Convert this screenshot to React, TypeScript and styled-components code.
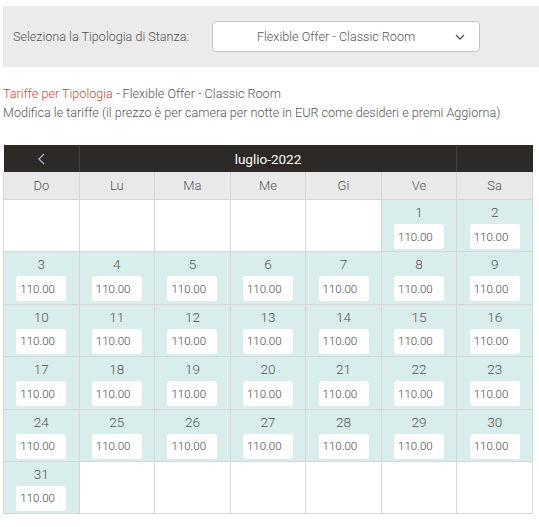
import styled, { createGlobalStyle } from 'styled-components';

const GlobalStyle = createGlobalStyle`
  body {
    margin: 0;
    background: #fff;
    font-family: Roboto, 'Liberation Sans', sans-serif;
    font-weight: 300;
    color: #555;
    overflow: hidden;
  }
`;

const WEEKDAYS = ['Do', 'Lu', 'Ma', 'Me', 'Gi', 'Ve', 'Sa'];
const FIRST_WEEKDAY = 5;
const DAYS_IN_MONTH = 31;

const StdPage = styled.div`
  padding: 6px 0 0 3px;
`;

const StdToolbar = styled.div`
  height: 61px;
  display: flex;
  align-items: center;
  padding-left: 10px;
  background: #ebebeb;
`;

const StdLabel = styled.span`
  font-size: 12.6px;
  color: #555;
  width: 199px;
`;

const StdSelect = styled.div`
  position: relative;
  width: 268px;
  height: 31px;
  box-sizing: border-box;
  display: flex;
  align-items: center;
  justify-content: center;
  padding-right: 20px;
  background: #fff;
  border: 1px solid #c4c4c4;
  border-radius: 4px;
  font-size: 12.6px;
  color: #555;

  svg {
    position: absolute;
    right: 14px;
    top: 12px;
  }
`;

const StdIntro = styled.div`
  margin-top: 17px;
  font-size: 12.6px;
  line-height: 19px;
  color: #555;
`;

const StdAccent = styled.span`
  color: #d0473a;
`;

const StdTable = styled.table`
  margin-top: 23px;
  width: 530px;
  border-collapse: collapse;
  table-layout: fixed;
`;

const StdNavCell = styled.th`
  height: 27px;
  padding: 0;
  background: #2d2926;
  border-right: 1px solid #45403c;
  color: #fff;
  font-size: 13.5px;
  font-weight: 400;
  text-align: center;
  vertical-align: middle;

  &:last-child {
    border-right: none;
  }
`;

const StdWeekday = styled.th`
  height: 27px;
  padding: 0;
  background: #e9e9e9;
  border: 1px solid #d6d6d6;
  border-top: none;
  font-size: 13px;
  font-weight: 300;
  color: #555;
  text-align: center;
`;

const StdDay = styled.td<{ $active: boolean }>`
  height: 51.4px;
  padding: 0;
  border: 1px solid #d6d6d6;
  background: ${(p) => (p.$active ? '#d9eeec' : '#fff')};
  text-align: center;
  vertical-align: top;
`;

const StdDayNumber = styled.div`
  margin-top: 3px;
  height: 19px;
  line-height: 19px;
  font-size: 13.5px;
  color: #555;
`;

const StdRateInput = styled.input`
  display: block;
  margin: 2px auto 0;
  width: 50px;
  height: 25px;
  box-sizing: border-box;
  padding: 0 0 0 4px;
  border: none;
  border-radius: 3px;
  background: #fff;
  font-family: Roboto, 'Liberation Sans', sans-serif;
  font-weight: 300;
  font-size: 11.5px;
  color: #444;
  outline: none;
`;

const ChevronDown = () => (
  <svg width="10" height="6" viewBox="0 0 10 6">
    <polyline points="1,1 5,5 9,1" fill="none" stroke="#555" strokeWidth="1.4" />
  </svg>
);

const ChevronLeft = () => (
  <svg width="7" height="12" viewBox="0 0 7 12" style={{ display: 'block', margin: '0 auto' }}>
    <polyline points="6,1 1,6 6,11" fill="none" stroke="#b8b2c8" strokeWidth="1.3" />
  </svg>
);

const buildWeeks = () => {
  const cells: (number | null)[] = [];
  for (let i = 0; i < FIRST_WEEKDAY; i++) cells.push(null);
  for (let d = 1; d <= DAYS_IN_MONTH; d++) cells.push(d);
  while (cells.length % 7 !== 0) cells.push(null);
  const weeks: (number | null)[][] = [];
  for (let i = 0; i < cells.length; i += 7) weeks.push(cells.slice(i, i + 7));
  return weeks;
};

const App: React.FC = () => {
  const weeks = buildWeeks();

  return (
    <StdPage>
      <GlobalStyle />
      <StdToolbar>
        <StdLabel>Seleziona la Tipologia di Stanza:</StdLabel>
        <StdSelect>
          Flexible Offer - Classic Room
          <ChevronDown />
        </StdSelect>
      </StdToolbar>

      <StdIntro>
        <StdAccent>Tariffe per Tipologia</StdAccent> - Flexible Offer - Classic Room
        <br />
        Modifica le tariffe (il prezzo è per camera per notte in EUR come desideri e premi Aggiorna)
      </StdIntro>

      <StdTable>
        <thead>
          <tr>
            <StdNavCell>
              <ChevronLeft />
            </StdNavCell>
            <StdNavCell colSpan={5}>luglio-2022</StdNavCell>
            <StdNavCell />
          </tr>
          <tr>
            {WEEKDAYS.map((w) => (
              <StdWeekday key={w}>{w}</StdWeekday>
            ))}
          </tr>
        </thead>
        <tbody>
          {weeks.map((week, wi) => (
            <tr key={wi}>
              {week.map((day, di) => (
                <StdDay key={di} $active={day != null}>
                  {day != null && (
                    <>
                      <StdDayNumber>{day}</StdDayNumber>
                      <StdRateInput defaultValue="110.00" />
                    </>
                  )}
                </StdDay>
              ))}
            </tr>
          ))}
        </tbody>
      </StdTable>
    </StdPage>
  );
};

export default App;
